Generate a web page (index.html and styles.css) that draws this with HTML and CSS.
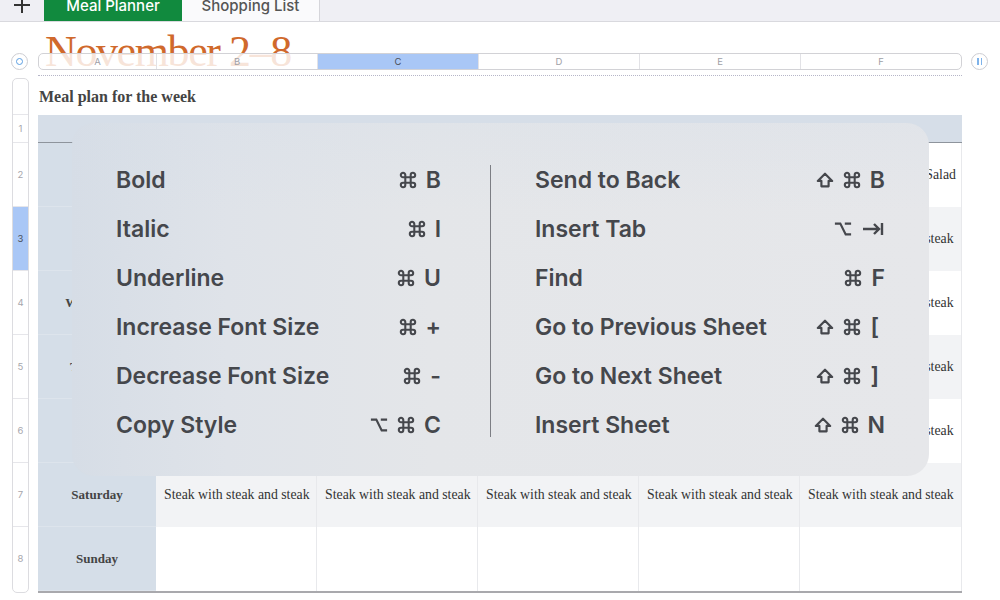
FILE: index.html
```html
<!DOCTYPE html>
<html lang="en">
<head>
<meta charset="UTF-8" />
<title>Meal Planner</title>
<link rel="stylesheet" href="styles.css">
</head>
<body>
  <!-- Sheet tabs -->
  <div class="tabbar">
    <div class="add">
      <svg width="18" height="18" viewBox="0 0 18 18"><path d="M9 1v16M1 9h16" stroke="#333" stroke-width="2" fill="none"/></svg>
    </div>
    <div class="tab active">Meal Planner</div>
    <div class="tab">Shopping List</div>
  </div>

  <div class="sheet">
    <h1 class="title">November 2–8</h1>

    <div class="colrow">
      <div class="corner"><span class="ring"></span></div>
      <div class="colbar">
        <div class="col">A</div>
        <div class="col">B</div>
        <div class="col selected">C</div>
        <div class="col">D</div>
        <div class="col">E</div>
        <div class="col">F</div>
      </div>
      <div class="freeze"><span></span><span></span></div>
    </div>
    <div class="dots"></div>

    <div class="sheet-body">
      <div class="rowbar">
        <div class="rh rh-caption"></div>
        <div class="rh rh-head">1</div>
        <div class="rh">2</div>
        <div class="rh selected">3</div>
        <div class="rh">4</div>
        <div class="rh">5</div>
        <div class="rh">6</div>
        <div class="rh">7</div>
        <div class="rh last">8</div>
      </div>

      <div class="main">
        <div class="caption">Meal plan for the week</div>
        <div class="table">
          <div class="cell head"></div><div class="cell head"></div><div class="cell head"></div><div class="cell head"></div><div class="cell head"></div><div class="cell head"></div>

          <div class="cell day">Monday</div>
          <div class="cell">Steak with steak and steak</div><div class="cell">Steak with steak and steak</div><div class="cell">Steak with steak and steak</div><div class="cell">Steak with steak and steak</div><div class="cell">Steak with steak and Salad</div>

          <div class="cell day">Tuesday</div>
          <div class="cell alt">Steak with steak and steak</div><div class="cell alt">Steak with steak and steak</div><div class="cell alt">Steak with steak and steak</div><div class="cell alt">Steak with steak and steak</div><div class="cell alt">Steak with steak and steak</div>

          <div class="cell day">Wednesday</div>
          <div class="cell">Steak with steak and steak</div><div class="cell">Steak with steak and steak</div><div class="cell">Steak with steak and steak</div><div class="cell">Steak with steak and steak</div><div class="cell">Steak with steak and steak</div>

          <div class="cell day">Thursday</div>
          <div class="cell alt">Steak with steak and steak</div><div class="cell alt">Steak with steak and steak</div><div class="cell alt">Steak with steak and steak</div><div class="cell alt">Steak with steak and steak</div><div class="cell alt">Steak with steak and steak</div>

          <div class="cell day">Friday</div>
          <div class="cell">Steak with steak and steak</div><div class="cell">Steak with steak and steak</div><div class="cell">Steak with steak and steak</div><div class="cell">Steak with steak and steak</div><div class="cell">Steak with steak and steak</div>

          <div class="cell day">Saturday</div>
          <div class="cell alt">Steak with steak and steak</div><div class="cell alt">Steak with steak and steak</div><div class="cell alt">Steak with steak and steak</div><div class="cell alt">Steak with steak and steak</div><div class="cell alt">Steak with steak and steak</div>

          <div class="cell day">Sunday</div>
          <div class="cell"></div><div class="cell"></div><div class="cell"></div><div class="cell"></div><div class="cell"></div>
        </div>
      </div>
    </div>
  </div>

  <!-- Keyboard shortcuts overlay -->
  <svg width="0" height="0" class="defs">
    <symbol id="cmd" viewBox="0 0 20 20"><path d="M7 7H13V13H7Z M7 7V4.5A2.5 2.5 0 1 0 4.5 7H7 M13 7V4.5A2.5 2.5 0 1 1 15.5 7H13 M7 13V15.5A2.5 2.5 0 1 1 4.5 13H7 M13 13V15.5A2.5 2.5 0 1 0 15.5 13H13" fill="none" stroke="currentColor" stroke-width="2.3"/></symbol>
    <symbol id="opt" viewBox="0 0 20 18"><path d="M1 3H7L13 15H19M12 3H19" fill="none" stroke="currentColor" stroke-width="2.4"/></symbol>
    <symbol id="shift" viewBox="0 0 20 18"><path d="M10 2L18 10H14V16H6V10H2Z" fill="none" stroke="currentColor" stroke-width="2.4" stroke-linejoin="round"/></symbol>
    <symbol id="tabkey" viewBox="0 0 24 18"><path d="M2 9H18M13 4L18 9L13 14M21 3V15" fill="none" stroke="currentColor" stroke-width="2.4"/></symbol>
  </svg>

  <div class="shortcuts">
    <div class="sc-col left">
      <div class="sc-row"><span>Bold</span><span class="keys"><svg class="k"><use href="#cmd"/></svg><span>B</span></span></div>
      <div class="sc-row"><span>Italic</span><span class="keys"><svg class="k"><use href="#cmd"/></svg><span>I</span></span></div>
      <div class="sc-row"><span>Underline</span><span class="keys"><svg class="k"><use href="#cmd"/></svg><span>U</span></span></div>
      <div class="sc-row"><span>Increase Font Size</span><span class="keys"><svg class="k"><use href="#cmd"/></svg><span>+</span></span></div>
      <div class="sc-row"><span>Decrease Font Size</span><span class="keys"><svg class="k"><use href="#cmd"/></svg><span>-</span></span></div>
      <div class="sc-row"><span>Copy Style</span><span class="keys"><svg class="k"><use href="#opt"/></svg><svg class="k"><use href="#cmd"/></svg><span>C</span></span></div>
    </div>
    <div class="divider"></div>
    <div class="sc-col right">
      <div class="sc-row"><span>Send to Back</span><span class="keys"><svg class="k"><use href="#shift"/></svg><svg class="k"><use href="#cmd"/></svg><span>B</span></span></div>
      <div class="sc-row"><span>Insert Tab</span><span class="keys"><svg class="k"><use href="#opt"/></svg><svg class="k wide"><use href="#tabkey"/></svg></span></div>
      <div class="sc-row"><span>Find</span><span class="keys"><svg class="k"><use href="#cmd"/></svg><span>F</span></span></div>
      <div class="sc-row"><span>Go to Previous Sheet</span><span class="keys"><svg class="k"><use href="#shift"/></svg><svg class="k"><use href="#cmd"/></svg><span class="br">[</span></span></div>
      <div class="sc-row"><span>Go to Next Sheet</span><span class="keys"><svg class="k"><use href="#shift"/></svg><svg class="k"><use href="#cmd"/></svg><span class="br">]</span></span></div>
      <div class="sc-row"><span>Insert Sheet</span><span class="keys"><svg class="k"><use href="#shift"/></svg><svg class="k"><use href="#cmd"/></svg><span>N</span></span></div>
    </div>
  </div>
</body>
</html>
```
FILE: styles.css
```css
body {
  margin: 0;
  width: 1000px;
  height: 600px;
  overflow: hidden;
  position: relative;
  background: #fff;
  font-family: Inter, "Noto Sans", sans-serif;
}

/* Tab bar */
.tabbar {
  display: flex;
  height: 22px;
  background: #efeff4;
  border-bottom: 1px solid #d9d9de;
  box-sizing: border-box;
}
.add {
  width: 44px;
  display: flex;
  justify-content: center;
}
.add svg {
  margin-top: -4px;
}
.tab {
  width: 138px;
  text-align: center;
  font-size: 15px;
  font-weight: 500;
  line-height: 11px;
  color: #555;
  background: #fafafc;
  border-right: 1px solid #d5d5da;
  box-sizing: border-box;
}
.tab.active {
  background: #118a3e;
  color: #fff;
  border-right: none;
}

/* Title */
.title {
  margin: 6px 0 0 45px;
  height: 25px;
  font-family: "Liberation Serif", serif;
  font-weight: normal;
  font-size: 44px;
  line-height: 48px;
  letter-spacing: -1.4px;
  color: #d0692c;
}

/* Column header */
.colrow {
  display: grid;
  grid-template-columns: 38px 924px 38px;
  height: 17px;
  position: relative;
  z-index: 1;
}
.corner {
  margin-left: 11px;
  width: 17px;
  height: 17px;
  border: 1px solid #cdcdd2;
  border-radius: 50%;
  box-sizing: border-box;
  background: #fff;
  display: flex;
  align-items: center;
  justify-content: center;
}
.ring {
  width: 7px;
  height: 7px;
  border: 1.3px solid #5d9fe2;
  border-radius: 50%;
  box-sizing: border-box;
}
.freeze {
  margin-left: 9px;
  width: 17px;
  height: 17px;
  border: 1px solid #cdcdd2;
  border-radius: 50%;
  box-sizing: border-box;
  display: flex;
  align-items: center;
  justify-content: center;
  gap: 2px;
}
.freeze span {
  width: 1.5px;
  height: 7px;
  background: #7fb3ea;
}
.colbar {
  display: grid;
  grid-template-columns: 118px repeat(4, 161px) 1fr;
  border: 1px solid #d2d2d6;
  border-radius: 5px;
  background: rgba(255, 255, 255, 0.82);
  overflow: hidden;
}
.col {
  font-size: 9.5px;
  line-height: 15px;
  text-align: center;
  color: #a0a0a6;
  border-right: 1px solid #e2e2e6;
}
.col:last-child {
  border-right: none;
}
.col.selected {
  background: #a9c7f6;
  color: #4a4f58;
}
.dots {
  margin: 5px 0 0 38px;
  width: 924px;
  border-top: 1px dotted #b6b6c8;
}

/* Sheet body */
.sheet-body {
  display: grid;
  grid-template-columns: 38px 924px;
  margin-top: 2px;
}
.rowbar {
  margin-left: 12px;
  width: 17px;
  border: 1px solid #dcdce0;
  border-radius: 5px;
  box-sizing: border-box;
  display: flex;
  flex-direction: column;
  overflow: hidden;
}
.rh {
  height: 64px;
  flex-shrink: 0;
  border-bottom: 1px solid #e6e6ea;
  box-sizing: border-box;
  display: flex;
  align-items: center;
  justify-content: center;
  font-size: 9.5px;
  color: #a6a6ac;
}
.rh-caption { height: 36px; }
.rh-head { height: 28px; }
.rh.last { border-bottom: none; height: 63px; }
.rh.selected {
  background: #a9c7f6;
  color: #4a4f58;
}

.caption {
  height: 37px;
  display: flex;
  align-items: center;
  padding-left: 1px;
  font-family: "Liberation Serif", serif;
  font-weight: bold;
  font-size: 16px;
  color: #444;
}

.table {
  display: grid;
  grid-template-columns: 118px repeat(4, 161px) 1fr;
  grid-template-rows: 28px repeat(7, 64px);
  border-bottom: 2px solid #a9a9ad;
}
.cell {
  display: flex;
  align-items: center;
  padding-left: 8px;
  border-right: 1px solid #e8e9ec;
  font-family: "Liberation Serif", serif;
  font-size: 13.8px;
  color: #333;
  white-space: nowrap;
  overflow: hidden;
}
.cell.alt {
  background: #f2f3f5;
}
.cell.head {
  background: #d6dee8;
  border-right: none;
  border-bottom: 1.5px solid #8e949c;
}
.cell.day {
  justify-content: center;
  padding-left: 0;
  background: #d5dee8;
  border-right: none;
  border-bottom: 1px solid #dde4ec;
  font-size: 13px;
  font-weight: bold;
  color: #444;
}

/* Shortcut overlay */
.defs {
  position: absolute;
}
.shortcuts {
  position: absolute;
  left: 72px;
  top: 123px;
  width: 857px;
  height: 353px;
  box-sizing: border-box;
  padding: 32px 44px 27px;
  border-radius: 22px;
  background:
    linear-gradient(180deg, rgba(214, 222, 232, 0.3) 0%, rgba(228, 230, 234, 0) 25%),
    linear-gradient(90deg, #d6dde6 0%, #dfe3e9 18%, #e4e6e9 42%, #e6e7ea 100%);
  display: flex;
  z-index: 5;
}
.sc-col {
  display: flex;
  flex-direction: column;
}
.sc-col.left {
  width: 325px;
}
.sc-col.right {
  flex: 1;
}
.divider {
  width: 1px;
  background: #7c7e84;
  margin: 10px 44px 12px 49px;
}
.sc-row {
  height: 49px;
  display: flex;
  align-items: center;
  justify-content: space-between;
  font-size: 23px;
  font-weight: 600;
  color: #45474c;
}
.keys {
  display: flex;
  align-items: center;
  gap: 9px;
}
.k {
  width: 18px;
  height: 18px;
}
.k.wide {
  width: 24px;
}
.br {
  margin-right: 6px;
}
```
